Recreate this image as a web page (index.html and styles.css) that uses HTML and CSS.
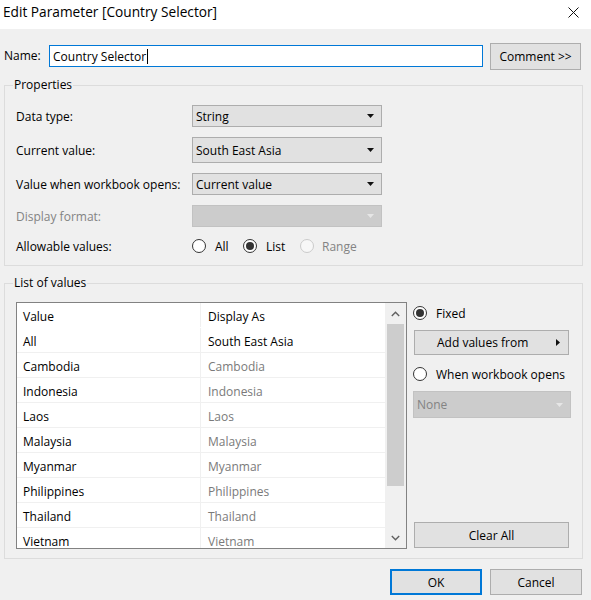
FILE: index.html
```html
<!DOCTYPE html>
<html>
<head>
<meta charset="utf-8">
<link rel="stylesheet" href="styles.css">
</head>
<body>
<div class="titlebar">
  <span class="title">Edit Parameter [Country Selector]</span>
  <svg class="close" width="11" height="11" viewBox="0 0 11 11"><path d="M0.5 0.5 L10.5 10.5 M10.5 0.5 L0.5 10.5" stroke="#111" stroke-width="1" fill="none"/></svg>
</div>
<div class="content">
  <div class="name-row">
    <span class="name-label">Name:</span>
    <div class="textbox">Country Selector<span class="caret"></span></div>
    <button class="btn comment">Comment &gt;&gt;</button>
  </div>

  <div class="group props">
    <div class="group-title">Properties</div>
    <div class="prop-grid">
      <div class="plabel">Data type:</div>
      <div class="combo"><span>String</span><svg class="arrow" width="7" height="4" viewBox="0 0 7 4"><polygon points="0,0 7,0 3.5,4" fill="#111"/></svg></div>
      <div class="plabel">Current value:</div>
      <div class="combo"><span>South East Asia</span><svg class="arrow" width="7" height="4" viewBox="0 0 7 4"><polygon points="0,0 7,0 3.5,4" fill="#111"/></svg></div>
      <div class="plabel">Value when workbook opens:</div>
      <div class="combo"><span>Current value</span><svg class="arrow" width="7" height="4" viewBox="0 0 7 4"><polygon points="0,0 7,0 3.5,4" fill="#111"/></svg></div>
      <div class="plabel muted">Display format:</div>
      <div class="combo disabled"><span></span><svg class="arrow" width="7" height="4" viewBox="0 0 7 4"><polygon points="0,0 7,0 3.5,4" fill="#e6e6e6"/></svg></div>
      <div class="plabel">Allowable values:</div>
      <div class="radios">
        <div class="opt opt-all"><svg class="radio" width="14" height="14" viewBox="0 0 14 14"><circle cx="7" cy="7" r="6.5" fill="#fff" stroke="#333"/></svg><span>All</span></div>
        <div class="opt opt-list"><svg class="radio" width="14" height="14" viewBox="0 0 14 14"><circle cx="7" cy="7" r="6.5" fill="#fff" stroke="#333"/><circle cx="7" cy="7" r="4" fill="#333"/></svg><span>List</span></div>
        <div class="opt opt-range"><svg class="radio" width="14" height="14" viewBox="0 0 14 14"><circle cx="7" cy="7" r="6.5" fill="#f7f7f7" stroke="#cacaca"/></svg><span class="muted">Range</span></div>
      </div>
    </div>
  </div>

  <div class="group values">
    <div class="group-title">List of values</div>
    <div class="values-body">
      <div class="listbox">
        <div class="rows">
          <div class="row header"><div class="c1">Value</div><div class="c2">Display As</div></div>
          <div class="row"><div class="c1">All</div><div class="c2">South East Asia</div></div>
          <div class="row"><div class="c1">Cambodia</div><div class="c2 dim">Cambodia</div></div>
          <div class="row"><div class="c1">Indonesia</div><div class="c2 dim">Indonesia</div></div>
          <div class="row"><div class="c1">Laos</div><div class="c2 dim">Laos</div></div>
          <div class="row"><div class="c1">Malaysia</div><div class="c2 dim">Malaysia</div></div>
          <div class="row"><div class="c1">Myanmar</div><div class="c2 dim">Myanmar</div></div>
          <div class="row"><div class="c1">Philippines</div><div class="c2 dim">Philippines</div></div>
          <div class="row"><div class="c1">Thailand</div><div class="c2 dim">Thailand</div></div>
          <div class="row"><div class="c1">Vietnam</div><div class="c2 dim">Vietnam</div></div>
        </div>
        <div class="scrollbar">
          <div class="sb-btn sb-up"><svg width="9" height="6" viewBox="0 0 9 6"><path d="M0.8 5 L4.5 1.3 L8.2 5" stroke="#606060" stroke-width="1.4" fill="none"/></svg></div>
          <div class="thumb"></div>
          <div class="sb-space"></div>
          <div class="sb-btn sb-down"><svg width="9" height="6" viewBox="0 0 9 6"><path d="M0.8 1 L4.5 4.7 L8.2 1" stroke="#606060" stroke-width="1.4" fill="none"/></svg></div>
        </div>
      </div>
      <div class="side">
        <div class="radio-row fixed"><svg class="radio" width="14" height="14" viewBox="0 0 14 14"><circle cx="7" cy="7" r="6.5" fill="#fff" stroke="#333"/><circle cx="7" cy="7" r="4" fill="#333"/></svg><span>Fixed</span></div>
        <button class="btn add-btn"><span>Add values from</span><svg class="rarrow" width="4" height="7" viewBox="0 0 4 7"><polygon points="0,0 4,3.5 0,7" fill="#111"/></svg></button>
        <div class="radio-row when"><svg class="radio" width="14" height="14" viewBox="0 0 14 14"><circle cx="7" cy="7" r="6.5" fill="#fff" stroke="#333"/></svg><span>When workbook opens</span></div>
        <div class="combo disabled none"><span class="none-text">None</span><svg class="arrow" width="7" height="4" viewBox="0 0 7 4"><polygon points="0,0 7,0 3.5,4" fill="#e6e6e6"/></svg></div>
        <button class="btn clear">Clear All</button>
      </div>
    </div>
  </div>

  <div class="footer">
    <button class="btn dlg ok">OK</button>
    <button class="btn dlg">Cancel</button>
  </div>
</div>
</body>
</html>
```

FILE: styles.css
```css
* { box-sizing: border-box; }
html, body { margin: 0; padding: 0; }
body {
  width: 591px;
  height: 600px;
  overflow: hidden;
  background: #f0f0f0;
  font-family: "Open Sans", "Noto Sans", sans-serif;
  font-size: 12px;
  color: #000;
}
svg { display: block; flex: none; }

.titlebar {
  height: 29px;
  background: #fff;
  display: flex;
  justify-content: space-between;
  align-items: flex-start;
}
.title {
  font-size: 13.7px;
  line-height: 24px;
  padding-left: 3px;
}
.close { margin: 7px 12px 0 0; }

.content { padding: 14px 8px 0 4px; }

.name-row {
  display: flex;
  align-items: flex-start;
  height: 27px;
}
.name-label { width: 45px; line-height: 26px; }
.textbox {
  width: 434px;
  height: 22px;
  margin-top: 2px;
  border: 1px solid #0078d7;
  background: #fff;
  padding-left: 3px;
  display: flex;
  align-items: center;
  white-space: nowrap;
}
.caret { width: 1px; height: 15px; background: #000; margin-left: 1px; }

.btn {
  font: inherit;
  color: #000;
  background: #e1e1e1;
  border: 1px solid #adadad;
  border-radius: 0;
  padding: 0;
  margin: 0;
}
.comment { width: 91px; height: 27px; margin-left: 7px; }

.group { border: 1px solid #dcdcdc; }
.group-title {
  display: table;
  margin: -9px 0 0 -3px;
  padding: 0 1px;
  background: #f0f0f0;
  line-height: 16px;
}
.props { margin-top: 15px; padding: 0 0 10px 11px; }

.prop-grid {
  display: grid;
  grid-template-columns: 176px 190px;
  grid-template-rows: 22px 26px 22px 22px 18px;
  row-gap: 10px;
  margin-top: 12px;
  align-items: center;
}
.plabel { white-space: nowrap; }
.muted { color: #838383; }

.combo {
  height: 100%;
  background: #e1e1e1;
  border: 1px solid #adadad;
  display: flex;
  align-items: center;
  justify-content: space-between;
  padding: 0 7px 0 3px;
  white-space: nowrap;
}
.combo.disabled { background: #cccccc; border-color: #c2c2c2; }

.radios { display: flex; align-items: center; height: 18px; }
.opt { display: flex; align-items: center; gap: 9px; }
.opt-all { width: 51px; }
.opt-list { width: 57px; }
.opt-range { gap: 8px; }

.values { margin-top: 17px; padding: 0 0 9px 11px; }
.values-body { display: flex; margin-top: 11px; }

.listbox {
  width: 391px;
  height: 247px;
  border: 1px solid #828282;
  background: #fff;
  display: flex;
  overflow: hidden;
}
.rows { width: 368px; flex: none; }
.row {
  display: flex;
  height: 25px;
  border-bottom: 1px solid #f0f0f0;
}
.row.header { border-bottom-color: #fff; }
.c1 {
  width: 184px;
  padding: 3px 0 0 6px;
  line-height: 21px;
  border-right: 1px solid #f0f0f0;
}
.c2 { width: 184px; padding: 3px 0 0 7px; line-height: 21px; }
.dim { color: #7a7a7a; }

.scrollbar {
  width: 21px;
  flex: none;
  background: #f0f0f0;
  display: flex;
  flex-direction: column;
  align-items: center;
}
.sb-btn {
  width: 100%;
  display: flex;
  align-items: center;
  justify-content: center;
}
.sb-up { height: 21px; }
.sb-down { height: 20px; }
.thumb { width: 17px; height: 162px; background: #cdcdcd; }
.sb-space { flex: 1; }

.side {
  width: 158px;
  margin-left: 6px;
  display: flex;
  flex-direction: column;
}
.radio-row {
  display: flex;
  align-items: center;
  gap: 9px;
  height: 18px;
  white-space: nowrap;
}
.fixed { margin-top: 2px; }
.add-btn {
  margin: 8px 0 0 1px;
  width: 155px;
  height: 25px;
  display: flex;
  align-items: center;
  justify-content: space-between;
  padding: 0 8px 0 22px;
}
.when { margin-top: 10px; }
.none { margin-top: 8px; height: 27px; }
.none-text { color: #838383; }
.clear {
  margin: auto 0 1px 1px;
  width: 155px;
  height: 26px;
}

.footer {
  display: flex;
  justify-content: flex-end;
  gap: 8px;
  margin-top: 10px;
  padding-right: 1px;
}
.dlg { width: 92px; height: 26px; }
.ok { border-color: #0078d7; box-shadow: inset 0 0 0 1px #0078d7; }
```
